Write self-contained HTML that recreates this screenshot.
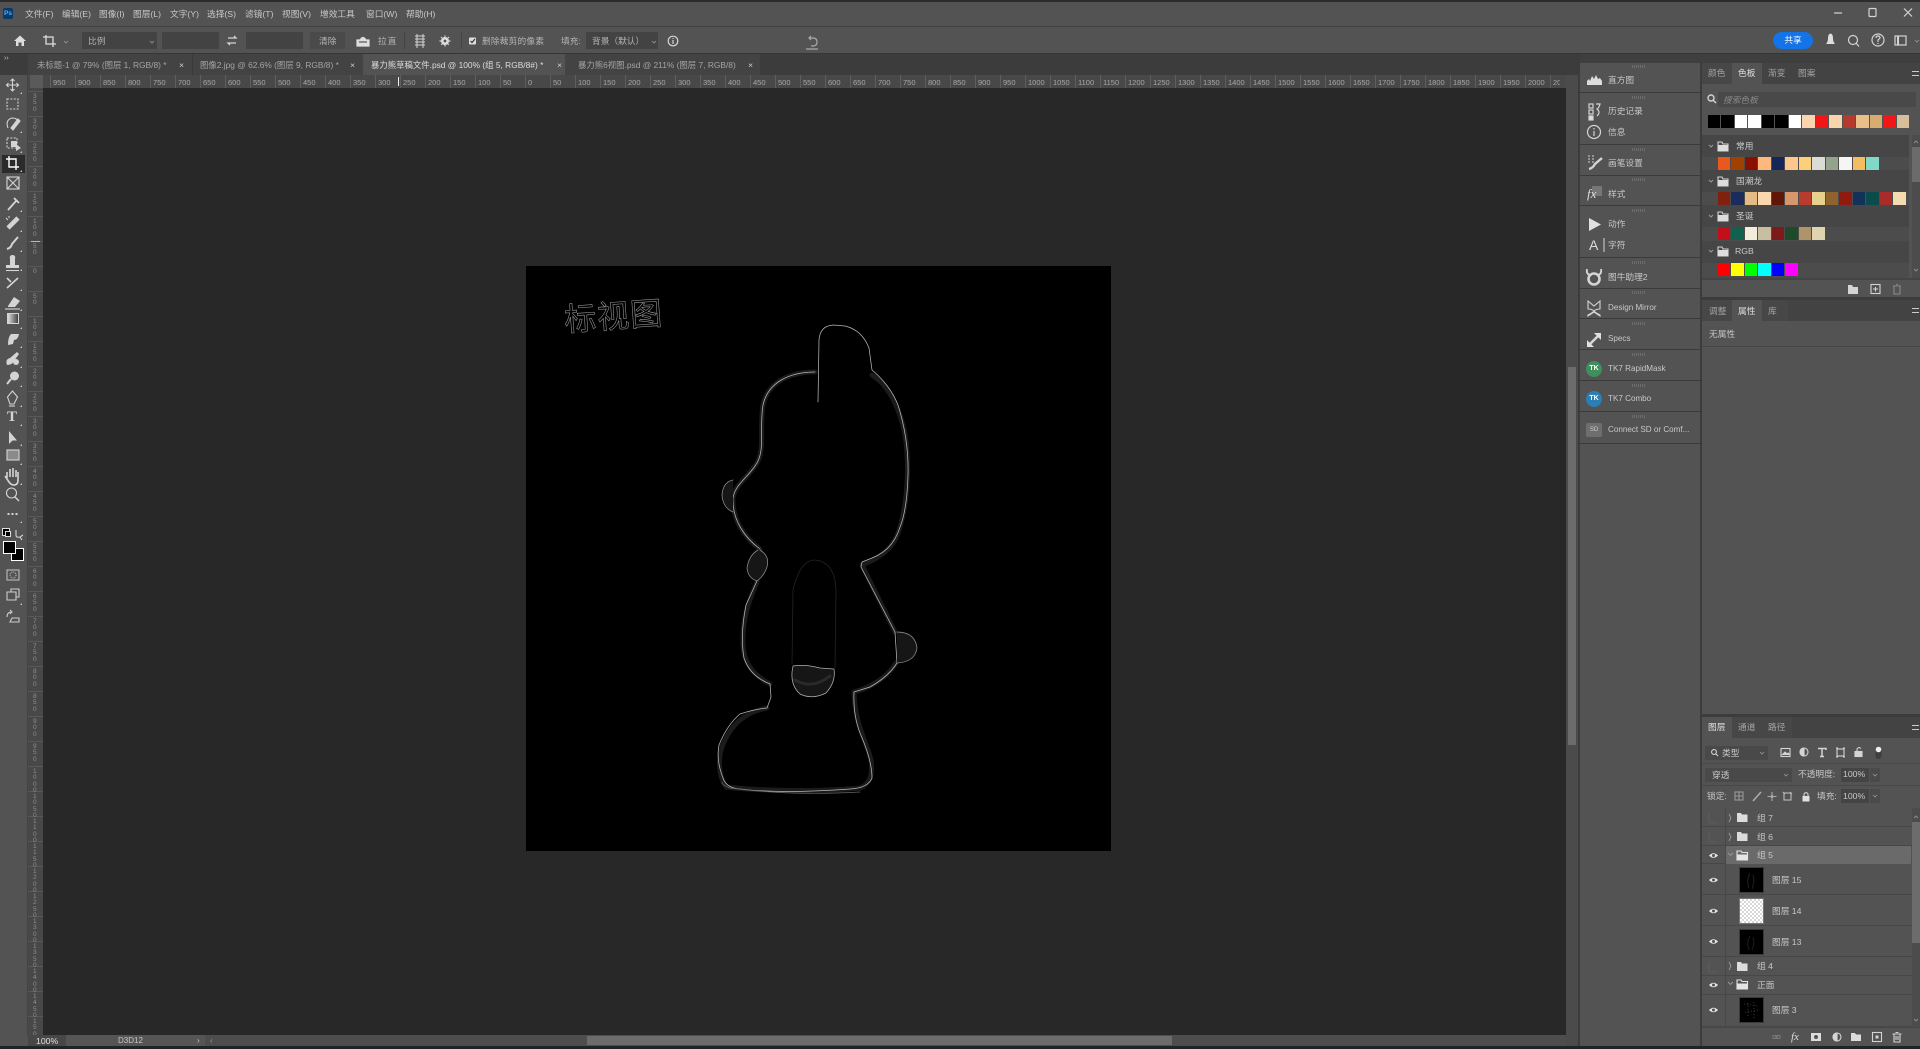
<!DOCTYPE html>
<html lang="zh"><head><meta charset="utf-8"><title>Photoshop</title>
<style>
html,body{margin:0;padding:0;background:#1e1e1e;overflow:hidden}
#r{position:absolute;left:0;top:0;width:1920px;height:1049px;overflow:hidden;background:#535353;filter:blur(.35px);font:8.7px/12px "Liberation Sans","Noto Sans CJK SC",sans-serif;color:#c8c8c8}
#r div,#r svg.a{position:absolute}
.t{white-space:nowrap;margin-top:-6px}
.b{background:#434343}
.m{font-size:8.1px}
.hr{display:flex;left:50px;top:75px;width:1510px;height:13px;overflow:hidden}
.hr span{flex:none;width:25px;height:13px;box-sizing:border-box;border-left:1px solid #5e5e5e;padding-left:2px;font:7.5px/16px "Liberation Sans",sans-serif;color:#a8a8a8}
.vr{left:28px;top:91px;width:15px;height:944px;overflow:hidden}
.vr p{margin:0;height:25px;box-sizing:border-box;border-top:1px solid #585858;padding:2px 0 0 5px;font:6.5px/6.3px "Liberation Sans",sans-serif;color:#8e8e8e;width:15px;word-break:break-all}
.vr p i{display:block;width:5px;font-style:normal}
.sw{display:flex;gap:1.2px}
.sw b{display:block;flex:none;width:12.3px;height:12.5px}
.g{height:3px;width:14px;background:repeating-linear-gradient(90deg,#6c6c6c 0 1px,transparent 1px 2px)}
.p{left:1580px;width:120px;background:#535353;border-bottom:1px solid #3a3a3a}
.l{left:1702px;width:210px;border-bottom:1px solid #474747}
</style></head><body><div id="r">

<!-- top -->
<div style="left:0;top:0;width:1920px;height:2px;background:#2c2c2c"></div>
<div style="left:0;top:26px;width:1920px;height:1px;background:#424242"></div>
<div style="left:0;top:53px;width:1920px;height:1px;background:#363636"></div>
<div style="left:3px;top:8px;width:10px;height:11px;background:#0a3a6a;border-radius:2px;color:#4db0ff;font:bold 6.5px/11px 'Liberation Sans',sans-serif;text-align:center">Ps</div>
<div class="t" style="left:25px;top:14px">文件(F)</div>
<div class="t" style="left:62px;top:14px">编辑(E)</div>
<div class="t" style="left:99px;top:14px">图像(I)</div>
<div class="t" style="left:133px;top:14px">图层(L)</div>
<div class="t" style="left:170px;top:14px">文字(Y)</div>
<div class="t" style="left:207px;top:14px">选择(S)</div>
<div class="t" style="left:245px;top:14px">滤镜(T)</div>
<div class="t" style="left:282px;top:14px">视图(V)</div>
<div class="t" style="left:320px;top:14px">增效工具</div>
<div class="t" style="left:366px;top:14px">窗口(W)</div>
<div class="t" style="left:406px;top:14px">帮助(H)</div>

<!-- options -->
<div class="b" style="left:82px;top:32px;width:75px;height:17px"></div>
<div class="t" style="left:88px;top:41px;color:#b4b4b4">比例</div>
<div class="b" style="left:162px;top:32px;width:57px;height:17px"></div>
<div class="b" style="left:246px;top:32px;width:57px;height:17px"></div>
<div style="left:310px;top:32px;width:35px;height:17px;background:#4a4a4a"></div>
<div class="t" style="left:319px;top:41px;color:#b4b4b4">清除</div>
<div class="t" style="left:378px;top:41px;color:#b4b4b4;letter-spacing:1px">拉直</div>
<div style="left:404px;top:32px;width:1px;height:17px;background:#444"></div>
<div style="left:461px;top:32px;width:1px;height:17px;background:#444"></div>
<div class="t" style="left:482px;top:41px;color:#b4b4b4;letter-spacing:.2px">删除裁剪的像素</div>
<div class="t" style="left:561px;top:41px;color:#b4b4b4">填充:</div>
<div class="b" style="left:586px;top:32px;width:72px;height:17px"></div>
<div class="t" style="left:592px;top:41px;color:#b4b4b4">背景（默认）</div>
<div style="left:1773px;top:32px;width:40px;height:17px;background:#1473e6;border-radius:9px;color:#fff;text-align:center;line-height:17px">共享</div>

<!-- tabs -->
<div style="left:0;top:54px;width:1578px;height:21px;background:#3c3c3c"></div>
<div style="left:28px;top:54px;width:732px;height:21px;background:#434343"></div>
<div style="left:192px;top:54px;width:1px;height:21px;background:#3a3a3a"></div>
<div style="left:363px;top:54px;width:202px;height:21px;background:#535353"></div>
<div class="t" style="left:37px;top:65px;color:#a4a4a4;font-size:8.4px">未标题-1 @ 79% (图层 1, RGB/8) *</div><div class="t" style="left:179px;top:65px;color:#ccc">×</div>
<div class="t" style="left:200px;top:65px;color:#a4a4a4;font-size:8.4px">图像2.jpg @ 62.6% (图层 9, RGB/8) *</div><div class="t" style="left:350px;top:65px;color:#ccc">×</div>
<div class="t" style="left:371px;top:65px;color:#ddd;font-size:8.4px">暴力熊草稿文件.psd @ 100% (组 5, RGB/8#) *</div><div class="t" style="left:557px;top:65px;color:#ccc">×</div>
<div class="t" style="left:578px;top:65px;color:#a4a4a4;font-size:8.4px">暴力熊6视图.psd @ 211% (图层 7, RGB/8)</div><div class="t" style="left:748px;top:65px;color:#ccc">×</div>
<div class="t" style="left:4px;top:59px;font-size:7px">››</div>

<!-- rulers -->
<div style="left:28px;top:75px;width:1538px;height:13px;background:#484848"></div>
<div style="left:30px;top:75px;width:13px;height:13px;background:#5a5a5a"></div>
<div style="left:28px;top:88px;width:15px;height:947px;background:#484848"></div>
<div style="left:27px;top:75px;width:1px;height:960px;background:#444"></div>
<div class="hr"><span>950</span><span>900</span><span>850</span><span>800</span><span>750</span><span>700</span><span>650</span><span>600</span><span>550</span><span>500</span><span>450</span><span>400</span><span>350</span><span>300</span><span>250</span><span>200</span><span>150</span><span>100</span><span>50</span><span>0</span><span>50</span><span>100</span><span>150</span><span>200</span><span>250</span><span>300</span><span>350</span><span>400</span><span>450</span><span>500</span><span>550</span><span>600</span><span>650</span><span>700</span><span>750</span><span>800</span><span>850</span><span>900</span><span>950</span><span>1000</span><span>1050</span><span>1100</span><span>1150</span><span>1200</span><span>1250</span><span>1300</span><span>1350</span><span>1400</span><span>1450</span><span>1500</span><span>1550</span><span>1600</span><span>1650</span><span>1700</span><span>1750</span><span>1800</span><span>1850</span><span>1900</span><span>1950</span><span>2000</span><span>2050</span></div>
<div style="left:398px;top:77px;width:1px;height:9px;background:#eee"></div>
<div class="vr"><p><i>350</i></p><p><i>300</i></p><p><i>250</i></p><p><i>200</i></p><p><i>150</i></p><p><i>100</i></p><p><i>50</i></p><p><i>0</i></p><p><i>50</i></p><p><i>100</i></p><p><i>150</i></p><p><i>200</i></p><p><i>250</i></p><p><i>300</i></p><p><i>350</i></p><p><i>400</i></p><p><i>450</i></p><p><i>500</i></p><p><i>550</i></p><p><i>600</i></p><p><i>650</i></p><p><i>700</i></p><p><i>750</i></p><p><i>800</i></p><p><i>850</i></p><p><i>900</i></p><p><i>950</i></p><p><i>1000</i></p><p><i>1050</i></p><p><i>1100</i></p><p><i>1150</i></p><p><i>1200</i></p><p><i>1250</i></p><p><i>1300</i></p><p><i>1350</i></p><p><i>1400</i></p><p><i>1450</i></p><p><i>1500</i></p></div>
<div style="left:31px;top:241px;width:9px;height:1px;background:#bbb"></div>

<!-- canvas -->
<div style="left:43px;top:88px;width:1523px;height:947px;background:#282828"></div>
<div style="left:526px;top:266px;width:585px;height:585px;background:#000"></div>
<svg class="a" style="left:0;top:0" width="1920" height="1049" viewBox="0 0 1920 1049" fill="none">
<text x="565" y="331" font-family="'Noto Sans CJK SC',sans-serif" font-size="32" fill="#000" stroke="#9c9c9c" stroke-width=".55" letter-spacing="1" transform="rotate(-4 565 331)">标视图</text>
<g stroke-linejoin="round" stroke-linecap="round">
<g stroke="#1b1b1b" stroke-width="5">
<path d="M815 372C790 372 768 382 763 405C759 430 766 452 755 466C747 478 735 485 733 498C732 520 745 538 760 549M757 582C748 603 742 620 743 645C744 665 755 676 770 684M767 708C745 712 732 725 725 740C717 755 718 775 726 787C760 791 820 792 860 788C870 784 873 775 871 760C866 740 855 725 854 692C870 688 888 677 896 663M895 632L862 565C880 557 894 550 900 527C908 500 910 460 904 429C898 405 888 385 872 375"/>
</g>
<path stroke="#b8b8b8" stroke-width=".75" d="M818 402L819 340Q820 326 833 325L845 326Q862 330 869 348L872 370Q890 385 898 405Q909 440 908 475Q907 510 900 527Q893 550 872 558L862 562L861 567L895 632L897 663Q888 677 870 687L854 692Q853 715 860 733Q872 760 872 778Q868 788 850 789Q780 794 740 789Q726 788 723 778Q716 760 719 745Q727 725 740 714Q755 709 767 708L771 697L770 684Q750 676 744 658Q740 635 746 605L757 581M815 372C790 372 768 382 763 405C759 430 766 452 755 466C747 478 735 485 733 498C732 520 745 538 760 549"/>
<path stroke="#909090" stroke-width=".75" fill="#161616" d="M733 480Q723 482 722 495Q723 508 733 512M760 550Q770 556 767 567Q764 576 757 581Q748 578 747 568Q749 555 758 550M897 632Q915 632 917 648Q915 662 897 663"/>
<path stroke="#b0b0b0" stroke-width=".75" fill="#161616" d="M793 666Q805 664 820 668L834 669Q836 682 826 693Q812 700 800 694Q791 686 792 672Z"/>
<path stroke="#242424" stroke-width=".8" d="M792 664L793 590Q800 560 815 560Q835 562 836 590L835 668"/>
<path stroke="#2a2a2a" stroke-width="3" d="M795 680Q812 690 830 676"/>
<path stroke="#666" stroke-width=".7" d="M722 782Q722 785 730 788Q790 796 860 792"/>
</g>

<!-- tool icons -->
<g stroke="#d4d4d4" stroke-width="1.1">
<path d="M12.5 79V91M6.5 85H18.5M10.5 81L12.5 79L14.5 81M10.5 89L12.5 91L14.5 89M8.5 83L6.5 85L8.5 87M16.5 83L18.5 85L16.500 87"/>
<rect x="7" y="99" width="11" height="10" stroke-dasharray="2 1.4"/>
<path d="M8 128Q5 120 12 118Q18 118 18 123"/><path d="M11 128L18 119L20 121L13 130Z" fill="#d4d4d4"/>
<rect x="7" y="138" width="10" height="10" stroke-dasharray="2 1.4"/><path d="M11 141H17V147H11Z" fill="#d4d4d4" stroke="none"/><path d="M16 144L21 148L16 151Z" fill="#d4d4d4" stroke="none"/>
<path d="M9 156V167H19M6 159H16V170" stroke="#fff" stroke-width="1.4"/>
<rect x="7" y="177" width="12" height="12"/><path d="M7 177L19 189M19 177L7 189"/>
<path d="M8 210L16 201M14 198L19 203" stroke-width="1.8"/>
<path d="M8 228L18 218" stroke-width="4.5"/><path d="M6 218L8 220M9 216V218" stroke-width="1"/>
<path d="M7 249Q11 248 12 244L18 237" stroke-width="2"/>
<path d="M6 268H19V265H15V259Q16 255 12.5 255Q9 255 10 259V265H6Z" fill="#d4d4d4" stroke="none"/><path d="M6 270.5H19"/>
<path d="M7 288L18 278M7 278L11 282" stroke-width="1.6"/>
<path d="M8 306L14 297L20 301L15 307H8Z" fill="#d4d4d4" stroke="none"/><path d="M5 309H20"/>
<path d="M8 345Q8 337 11 334H19Q18 340 14 340L13 344Z" fill="#d4d4d4" stroke="none"/>
<path d="M7 365Q5 359 10 358L17 352L19 354L14 361Q12 365 7 365Z" fill="#d4d4d4" stroke="none"/><circle cx="16" cy="362" r="3" fill="#d4d4d4" stroke="none"/>
<circle cx="14.5" cy="376" r="4.5" fill="#d4d4d4" stroke="none"/><path d="M11 379L7 384" stroke-width="2"/>
<path d="M12.5 391L17.5 397L14 404H10L7.5 397Z"/><path d="M9 406H15"/>
<path d="M9 431V444L12.5 440.5H17Z" fill="#d4d4d4" stroke="none"/>
<rect x="7" y="450" width="12" height="10" fill="#8a8a8a"/>
<path d="M7 478V472M10 477V469M13 477V468M16 477V470M5 476L9 482Q11 485 14 485Q18 485 18 480V472" stroke-width="1.6"/>
<circle cx="11.5" cy="493" r="5"/><path d="M15 497L19 501" stroke-width="1.5"/>
<path d="M7.5 514H9.5M11.5 514H13.5M15.5 514H17.5" stroke-width="2"/>
<rect x="7" y="570" width="12" height="10" stroke="#bbb"/><circle cx="13" cy="575" r="3" stroke="#bbb" stroke-dasharray="1 1"/>
<path d="M7 592H16V600H7ZM11 592V589H19V597H16" stroke="#ccc"/>
<path d="M7 617Q7 612 12 612M10 610L12 612L10 614M12 618H19V622H10Z" stroke="#ccc"/>
<path d="M16 530V535Q16 538 20 537M23 535L20 537L22 540" stroke-width="1.1"/>
</g>
<!-- tool corner triangles -->
<path fill="#c8c8c8" d="M22 92v2h-2zM22 131v2h-2zM22 151v2h-2zM22 170v2h-2zM22 210v2h-2zM22 230v2h-2zM22 250v2h-2zM22 269v2h-2zM22 289v2h-2zM22 309v2h-2zM22 327v2h-2zM22 346v2h-2zM22 366v2h-2zM22 385v2h-2zM22 405v2h-2zM22 424v2h-2zM22 444v2h-2zM22 463v2h-2zM22 483v2h-2zM22 521v2h-2zM22 603v2h-2z"/>
</svg>
<div style="left:2px;top:155px;width:23px;height:18px;background:#2b2b2b;z-index:-1"></div>
<div style="left:7px;top:313px;width:12px;height:11px;background:linear-gradient(90deg,#dcdcdc,#444);border:1px solid #d4d4d4;box-sizing:border-box"></div>
<div class="t" style="left:7px;top:417px;font:bold 15px/12px 'Liberation Serif',serif;color:#d4d4d4">T</div>
<div style="left:2px;top:528px;width:6px;height:6px;background:#000;border:1px solid #ddd"></div>
<div style="left:5px;top:531px;width:4px;height:4px;background:#000;border:1px solid #ddd"></div>
<div style="left:11px;top:548px;width:11px;height:11px;background:#000;border:1px solid #fff"></div>
<div style="left:3px;top:541px;width:11px;height:11px;background:#000;border:1px solid #fff"></div>

<!-- options icons -->
<svg class="a" style="left:0;top:0" width="1920" height="1049" viewBox="0 0 1920 1049" fill="none" stroke="#d4d4d4" stroke-width="1.2">
<path d="M14 41L20 35.5L26 41H24V46H21.5V42.5H18.5V46H16V41Z" fill="#ddd" stroke="none"/>
<path d="M46 35V44H56M43 37H53V47" stroke="#ddd" stroke-width="1.3"/>
<path d="M64 41L66 43L68 41M150 41L152 43L154 41M652 41L654 43L656 41" stroke="#999" stroke-width=".8"/>
<path d="M228 38H236L234 36M236 43H228L230 45" stroke-width="1.3"/>
<path d="M357 40H369V46H357ZM360 40Q363 35 366 40" stroke="#ddd" fill="#ddd"/><path d="M359 42H367" stroke="#535353"/>
<path d="M415 36H425M415 39H425M415 42H425M415 45H425M417 34V48M423 34V48" stroke-width="1"/>
<circle cx="445" cy="41" r="4" fill="#ddd" stroke="none"/><circle cx="445" cy="41" r="1.4" fill="#535353" stroke="none"/><path d="M445 35.500V46.500M439.500 41H450.500M441 37L449 45M449 37L441 45" stroke-width="1.2" stroke-dasharray="1.500 8"/>
<rect x="469" y="37.5" width="7" height="7" fill="#ddd" rx="1" stroke="none"/><path d="M470.5 41L472 42.5L475 39" stroke="#333"/>
<circle cx="673" cy="41" r="4.8"/><path d="M673 40V44M673 38V39"/>
<path d="M809 38H813Q817 38 817 42T813 46H811M811 36L809 38L811 40M806 49H818" stroke="#aaa"/>
<path d="M1834 13H1842"/><rect x="1869" y="8.5" width="7" height="8" rx="1"/><path d="M1904 8.5L1912 16.5M1912 8.5L1904 16.5"/>
<path d="M1826 44H1835Q1833 42 1833 38Q1833 34 1830.5 33.5Q1828 34 1828 38Q1828 42 1826 44Z" fill="#ddd" stroke="none"/>
<circle cx="1853" cy="40" r="4.5"/><path d="M1856 43L1859 46.5"/>
<circle cx="1878" cy="40" r="6"/><path d="M1876 38Q1876 36 1878 36T1880 38L1878 40V42M1878 43V44"/>
<rect x="1895" y="36" width="11" height="9"/><path d="M1898 36V45" stroke-width="2"/>
<path d="M1915 40L1917 42L1919 40" stroke="#999" stroke-width=".8"/>
<path d="M1692 57L1690 59L1692 61M1695 57L1693 59L1695 61M1913 57L1915 59L1913 61M1916 57L1918 59L1916 61" stroke-width=".8"/>
</svg>

<!-- bottom status -->
<div style="left:28px;top:1035px;width:1550px;height:11px;background:#4d4d4d"></div>
<div style="left:28px;top:1035px;width:38px;height:11px;background:#474747"></div>
<div style="left:66px;top:1035px;width:139px;height:11px;background:#555"></div>
<div style="left:587px;top:1036px;width:585px;height:9px;background:#6c6c6c"></div>
<div class="t" style="left:36px;top:1041px;color:#e0e0e0">100%</div>
<div class="t" style="left:118px;top:1041px;font-size:8px">D3D12</div>
<div class="t" style="left:197px;top:1041px;font-size:8px">›</div>
<div class="t" style="left:210px;top:1041px;font-size:8px;color:#999">‹</div>
<div style="left:0;top:1046px;width:1920px;height:3px;background:#232323"></div>

<!-- v scrollbar -->
<div style="left:1566px;top:75px;width:12px;height:971px;background:#4b4b4b"></div>
<div style="left:1568px;top:367px;width:8px;height:378px;background:#6c6c6c"></div>
<div style="left:1578px;top:54px;width:2px;height:992px;background:#3c3c3c"></div>
<div style="left:1700px;top:54px;width:2px;height:992px;background:#3c3c3c"></div>
<div style="left:1580px;top:54px;width:340px;height:9px;background:#3f3f3f"></div>

<!-- dock -->
<div class="p" style="top:63px;height:29px"></div>
<div class="p" style="top:93px;height:51px"></div>
<div class="p" style="top:145px;height:30px"></div>
<div class="p" style="top:176px;height:29px"></div>
<div class="p" style="top:206px;height:51px"></div>
<div class="p" style="top:258px;height:30px"></div>
<div class="p" style="top:289px;height:29px"></div>
<div class="p" style="top:319px;height:30px"></div>
<div class="p" style="top:350px;height:30px"></div>
<div class="p" style="top:381px;height:30px"></div>
<div class="p" style="top:412px;height:31px"></div>
<div class="g" style="left:1632px;top:65px"></div><div class="g" style="left:1632px;top:96px"></div><div class="g" style="left:1632px;top:148px"></div><div class="g" style="left:1632px;top:178px"></div><div class="g" style="left:1632px;top:209px"></div><div class="g" style="left:1632px;top:261px"></div><div class="g" style="left:1632px;top:291px"></div><div class="g" style="left:1632px;top:322px"></div><div class="g" style="left:1632px;top:353px"></div><div class="g" style="left:1632px;top:384px"></div><div class="g" style="left:1632px;top:415px"></div>
<div class="t" style="left:1608px;top:80px">直方图</div>
<div class="t" style="left:1608px;top:111px">历史记录</div>
<div class="t" style="left:1608px;top:132px">信息</div>
<div class="t" style="left:1608px;top:163px">画笔设置</div>
<div class="t" style="left:1608px;top:194px">样式</div>
<div class="t" style="left:1608px;top:224px">动作</div>
<div class="t" style="left:1608px;top:245px">字符</div>
<div class="t" style="left:1608px;top:277px">图牛助理2</div>
<div class="t m" style="left:1608px;top:308px">Design Mirror</div>
<div class="t m" style="left:1608px;top:339px">Specs</div>
<div class="t m" style="left:1608px;top:369px">TK7 RapidMask</div>
<div class="t m" style="left:1608px;top:399px">TK7 Combo</div>
<div class="t m" style="left:1608px;top:430px">Connect SD or Comf...</div>
<div class="t" style="left:1587px;top:194px;font:italic 13px/12px 'Liberation Serif',serif;color:#ddd;z-index:2">fx</div>
<div class="t" style="left:1589px;top:245px;font:14px/12px 'Liberation Sans',sans-serif;color:#ddd">A</div>
<svg class="a" style="left:0;top:0" width="1920" height="1049" viewBox="0 0 1920 1049" fill="none" stroke="#d4d4d4" stroke-width="1.2">
<path d="M1587 85V81L1589 79L1590 81L1592 76L1594 79L1596 75L1598 79L1600 78L1602 81V85Z" fill="#ddd" stroke="none"/>
<rect x="1589" y="104" width="4" height="4"/><rect x="1589" y="110" width="4" height="4"/><rect x="1589" y="116" width="4" height="4" fill="#ddd"/><path d="M1596 104H1600Q1599 108 1597 109Q1601 112 1597 116"/>
<circle cx="1594" cy="132" r="6.5"/><path d="M1594 131V136M1594 128V129.5"/>
<path d="M1588 156H1590M1592 156H1594M1588 159H1590M1592 159H1594M1588 162H1590M1592 162H1594" stroke-width="1"/><path d="M1589 169Q1593 168 1595 164L1602 158" stroke-width="2.4"/>
<rect x="1592" y="186" width="10" height="10" fill="#777" stroke="none"/>
<path d="M1589 218V231L1601 224.500Z" fill="#e0e0e0" stroke="none"/>
<path d="M1604 238V252" stroke-width="1"/>
<circle cx="1594" cy="279" r="5.5" stroke-width="2.6"/><path d="M1587 269Q1586 274 1590 275M1601 269Q1602 274 1598 275" stroke-width="1.8"/>
<path d="M1588 301L1594 306L1600 301V309Q1596 309 1594 311Q1596 313 1600 315V316L1594 312L1588 316V315Q1592 313 1594 311Q1592 309 1588 309Z" stroke-width="1.1"/>
<path d="M1588 346L1600 334" stroke-width="2.6"/><path d="M1594 333H1601V340Z M1587 340V347H1594Z" fill="#e0e0e0" stroke="none"/>
</svg>
<div style="left:1586px;top:361px;width:16px;height:16px;border-radius:50%;background:#3f8f5c;color:#fff;font:bold 7px/16px 'Liberation Sans',sans-serif;text-align:center">TK</div>
<div style="left:1586px;top:391px;width:16px;height:16px;border-radius:50%;background:#2a7fb5;color:#fff;font:bold 7px/16px 'Liberation Sans',sans-serif;text-align:center">TK</div>
<div style="left:1586px;top:423px;width:16px;height:14px;border-radius:2px;background:#6e6e6e;color:#ccc;font:6px/14px 'Liberation Sans',sans-serif;text-align:center">SD</div>

<!-- swatches panel -->
<div style="left:1702px;top:63px;width:218px;height:21px;background:#434343"></div>
<div style="left:1732px;top:63px;width:30px;height:21px;background:#535353"></div>
<div style="left:1702px;top:63px;width:30px;height:21px;background:#474747"></div>
<div class="t" style="left:1708px;top:73px;color:#a4a4a4">颜色</div>
<div class="t" style="left:1738px;top:73px;color:#e0e0e0">色板</div>
<div class="t" style="left:1768px;top:73px;color:#a4a4a4">渐变</div>
<div class="t" style="left:1798px;top:73px;color:#a4a4a4">图案</div>
<div style="left:1912px;top:71px;width:7px;height:1px;border-top:1px solid #ccc;border-bottom:1px solid #ccc;padding-top:2px"></div>
<div style="left:1718px;top:92px;width:198px;height:15px;background:#494949"></div>
<div class="t" style="left:1723px;top:100px;font-style:italic;color:#8a8a8a">搜索色板</div>
<div class="sw" style="left:1708px;top:115px"><b style="background:#000"></b><b style="background:#000"></b><b style="background:#fff"></b><b style="background:#fff"></b><b style="background:#000"></b><b style="background:#000"></b><b style="background:#fff"></b><b style="background:#f8d5ac"></b><b style="background:#f21616"></b><b style="background:#f8d5ac"></b><b style="background:#b43a2e"></b><b style="background:#e8c088"></b><b style="background:#d8ab70"></b><b style="background:#f21616"></b><b style="background:#d7bf9c"></b></div>

<div style="left:1702px;top:135px;width:207px;height:143px;background:#4c4c4c"></div>
<div style="left:1702px;top:135px;width:207px;height:22px;background:#464646"></div>
<div style="left:1702px;top:170px;width:207px;height:22px;background:#464646"></div>
<div style="left:1702px;top:205px;width:207px;height:22px;background:#464646"></div>
<div style="left:1702px;top:241px;width:207px;height:22px;background:#464646"></div>
<div class="t" style="left:1736px;top:146px">常用</div>
<div class="t" style="left:1736px;top:181px">国潮龙</div>
<div class="t" style="left:1736px;top:216px">圣诞</div>
<div class="t" style="left:1735px;top:251px">RGB</div>
<div class="sw" style="left:1718px;top:157px"><b style="background:#e9591e"></b><b style="background:#a04100"></b><b style="background:#8a0f00"></b><b style="background:#fdb97d"></b><b style="background:#14275a"></b><b style="background:#fdc68f"></b><b style="background:#fecf7a"></b><b style="background:#dbdcd6"></b><b style="background:#94a28e"></b><b style="background:#f5f5f3"></b><b style="background:#f3bd62"></b><b style="background:#7fd8c8"></b></div>
<div class="sw" style="left:1718px;top:192px"><b style="background:#80210f"></b><b style="background:#1b2c5c"></b><b style="background:#e4bb85"></b><b style="background:#f9d8ae"></b><b style="background:#601708"></b><b style="background:#d6986a"></b><b style="background:#b73b2e"></b><b style="background:#e6d08e"></b><b style="background:#8f622e"></b><b style="background:#8f1b0f"></b><b style="background:#12325a"></b><b style="background:#0a4b4b"></b><b style="background:#a92c2a"></b><b style="background:#f5dcb0"></b></div>
<div class="sw" style="left:1718px;top:227px"><b style="background:#c1101c"></b><b style="background:#12604e"></b><b style="background:#f3ebdc"></b><b style="background:#c7bf9f"></b><b style="background:#7e1a1c"></b><b style="background:#1e4a2a"></b><b style="background:#ae9468"></b><b style="background:#e0d3b0"></b></div>
<div class="sw" style="left:1718px;top:263px"><b style="background:#f00"></b><b style="background:#ff0"></b><b style="background:#0f0"></b><b style="background:#0ff"></b><b style="background:#00f"></b><b style="background:#f0f"></b></div>
<div style="left:1912px;top:135px;width:8px;height:143px;background:#4c4c4c"></div>
<div style="left:1912px;top:147px;width:8px;height:35px;background:#6b6b6b"></div>
<div style="left:1702px;top:278px;width:218px;height:2px;background:#444"></div>

<!-- properties -->
<div style="left:1702px;top:297px;width:218px;height:3px;background:#3c3c3c"></div>
<div style="left:1702px;top:300px;width:218px;height:21px;background:#434343"></div>
<div style="left:1702px;top:300px;width:30px;height:21px;background:#474747"></div>
<div style="left:1732px;top:300px;width:30px;height:21px;background:#535353"></div>
<div style="left:1762px;top:300px;width:26px;height:21px;background:#474747"></div>
<div class="t" style="left:1709px;top:311px;color:#a4a4a4">调整</div>
<div class="t" style="left:1738px;top:311px;color:#e0e0e0">属性</div>
<div class="t" style="left:1768px;top:311px;color:#a4a4a4">库</div>
<div style="left:1912px;top:308px;width:7px;height:1px;border-top:1px solid #ccc;border-bottom:1px solid #ccc;padding-top:2px"></div>
<div class="t" style="left:1709px;top:334px">无属性</div>
<div style="left:1702px;top:346px;width:218px;height:1px;background:#454545"></div>

<!-- layers -->
<div style="left:1702px;top:714px;width:218px;height:3px;background:#3c3c3c"></div>
<div style="left:1702px;top:717px;width:218px;height:21px;background:#434343"></div>
<div style="left:1702px;top:717px;width:30px;height:21px;background:#535353"></div>
<div style="left:1732px;top:717px;width:60px;height:21px;background:#474747"></div>
<div class="t" style="left:1708px;top:727px;color:#e0e0e0">图层</div>
<div class="t" style="left:1738px;top:727px;color:#a4a4a4">通道</div>
<div class="t" style="left:1768px;top:727px;color:#a4a4a4">路径</div>
<div style="left:1912px;top:725px;width:7px;height:1px;border-top:1px solid #ccc;border-bottom:1px solid #ccc;padding-top:2px"></div>
<div style="left:1705px;top:746px;width:63px;height:14px;background:#494949"></div>
<div class="t" style="left:1722px;top:753px">类型</div>
<div style="left:1702px;top:763px;width:218px;height:1px;background:#484848"></div>
<div style="left:1705px;top:768px;width:87px;height:14px;background:#494949"></div>
<div class="t" style="left:1712px;top:775px">穿透</div>
<div class="t" style="left:1798px;top:774px">不透明度:</div>
<div style="left:1841px;top:768px;width:28px;height:14px;background:#444"></div>
<div style="left:1870px;top:768px;width:10px;height:14px;background:#4a4a4a"></div>
<div class="t" style="left:1843px;top:774px">100%</div>
<div style="left:1702px;top:785px;width:218px;height:1px;background:#484848"></div>
<div class="t" style="left:1707px;top:796px">锁定:</div>
<div class="t" style="left:1817px;top:796px">填充:</div>
<div style="left:1841px;top:789px;width:28px;height:14px;background:#444"></div>
<div style="left:1870px;top:789px;width:10px;height:14px;background:#4a4a4a"></div>
<div class="t" style="left:1843px;top:796px">100%</div>

<div class="l" style="top:808px;height:18px"></div>
<div class="l" style="top:827px;height:18px"></div>
<div class="l" style="top:846px;height:17px"></div>
<div style="left:1725px;top:846px;width:186px;height:18px;background:#6a6a6a"></div>
<div class="l" style="top:864px;height:30px"></div>
<div class="l" style="top:895px;height:30px"></div>
<div class="l" style="top:926px;height:30px"></div>
<div class="l" style="top:957px;height:18px"></div>
<div class="l" style="top:976px;height:18px"></div>
<div class="l" style="top:995px;height:31px"></div>
<div style="left:1725px;top:808px;width:1px;height:219px;background:#484848"></div>
<div class="t" style="left:1757px;top:818px">组 7</div>
<div class="t" style="left:1757px;top:837px">组 6</div>
<div class="t" style="left:1757px;top:855px">组 5</div>
<div class="t" style="left:1772px;top:880px">图层 15</div>
<div class="t" style="left:1772px;top:911px">图层 14</div>
<div class="t" style="left:1772px;top:942px">图层 13</div>
<div class="t" style="left:1757px;top:966px">组 4</div>
<div class="t" style="left:1757px;top:985px">正面</div>
<div class="t" style="left:1772px;top:1010px">图层 3</div>
<div style="left:1740px;top:868px;width:23px;height:24px;background:#000;box-shadow:0 0 0 1px #3a3a3a"></div>
<div style="left:1740px;top:899px;width:23px;height:24px;background:repeating-conic-gradient(#d8d8d8 0 25%,#fff 0 50%) 0 0/4px 4px;box-shadow:0 0 0 1px #777"></div>
<div style="left:1740px;top:930px;width:23px;height:24px;background:#000;box-shadow:0 0 0 1px #3a3a3a"></div>
<div style="left:1740px;top:998px;width:23px;height:24px;background:#000;box-shadow:0 0 0 1px #3a3a3a"></div>
<div style="left:1912px;top:808px;width:8px;height:219px;background:#4c4c4c"></div>
<div style="left:1912px;top:822px;width:8px;height:121px;background:#6c6c6c"></div>
<div style="left:1702px;top:1027px;width:218px;height:1px;background:#484848"></div>
<div class="t" style="left:1791px;top:1037px;font:italic 11px/12px 'Liberation Serif',serif;color:#ddd">fx</div>

<svg class="a" style="left:0;top:0" width="1920" height="1049" viewBox="0 0 1920 1049" fill="none" stroke="#d4d4d4" stroke-width="1.1">
<!-- swatch panel icons -->
<circle cx="1711" cy="98" r="3" stroke-width="1.4"/><path d="M1713 100L1716 103" stroke-width="1.4"/>
<path d="M1709 145L1711 147L1713 145" stroke="#999"/><path d="M1718 142H1722L1723 144H1728V151H1718Z" fill="#4c4c4c"/><path d="M1718 145H1728V151H1718Z" fill="#ddd" stroke="none"/>
<path d="M1709 180L1711 182L1713 180" stroke="#999"/><path d="M1718 177H1722L1723 179H1728V186H1718Z"/><path d="M1718 180H1728V186H1718Z" fill="#ddd" stroke="none"/>
<path d="M1709 215L1711 217L1713 215" stroke="#999"/><path d="M1718 212H1722L1723 214H1728V221H1718Z"/><path d="M1718 215H1728V221H1718Z" fill="#ddd" stroke="none"/>
<path d="M1709 250L1711 252L1713 250" stroke="#999"/><path d="M1718 247H1722L1723 249H1728V256H1718Z"/><path d="M1718 250H1728V256H1718Z" fill="#ddd" stroke="none"/>
<path d="M1914 143L1916 141L1918 143M1914 269L1916 271L1918 269" stroke="#888"/>
<path d="M1848 285H1852L1853 287H1858V294H1848Z" fill="#d4d4d4" stroke="none"/>
<rect x="1871" y="284.500" width="9" height="9"/><path d="M1875.500 287V291.500M1873 289H1878"/>
<path d="M1893 286H1901M1894 286V294H1900V286M1896 284.500H1898" stroke="#888"/>
<!-- layer filter icons -->
<circle cx="1714" cy="752" r="2.4"/><path d="M1716 754L1718 756"/>
<path d="M1760 752L1762 754L1764 752M1784 774L1786 776L1788 774M1873 774L1875 776L1877 774M1873 795L1875 797L1877 795" stroke="#999" stroke-width=".8"/>
<rect x="1781" y="748.500" width="9" height="8"/><path d="M1782 755L1785 752L1787 754L1788 753L1790 755" fill="#d4d4d4"/>
<circle cx="1804" cy="752" r="4"/><path d="M1804 748A4 4 0 0 0 1804 756Z" fill="#d4d4d4"/>
<path d="M1818 748.500H1826V750M1822 748.500V756.500M1820 756.500H1824" stroke-width="1.5"/>
<rect x="1837" y="749" width="7" height="7"/><path d="M1836 748H1838M1843 748H1845M1836 757H1838M1843 757H1845"/>
<rect x="1855" y="751.500" width="7" height="5" fill="#d4d4d4"/><path d="M1857 751.500V749Q1858.500 746.500 1861 748.500"/>
<rect x="1875.500" y="748" width="6" height="11" rx="3" fill="#3e3e3e" stroke="none"/><circle cx="1878.500" cy="749.500" r="2.800" fill="#eee" stroke="none"/>
<!-- lock icons -->
<rect x="1735" y="792" width="8" height="8" stroke="#999"/><path d="M1735 796H1743M1739 792V800" stroke="#999"/>
<path d="M1753 801L1761 792" stroke="#aaa" stroke-width="1.6"/>
<path d="M1772 792V801M1767.500 796.500H1776.500" stroke="#aaa"/><circle cx="1772" cy="796.500" r="1.500" fill="#aaa" stroke="none"/>
<rect x="1784" y="793" width="7" height="7" stroke="#bbb"/><path d="M1783 792L1785 794M1790 792L1792 794" stroke="#bbb"/>
<rect x="1802.500" y="796" width="7" height="5.500" fill="#e0e0e0" stroke="none"/><path d="M1804 796V794Q1806 791 1808 794V796"/>
<!-- eye icons -->
<g fill="#e6e6e6" stroke="none">
<path d="M1709 855.500Q1713.500 851 1718 855.500Q1713.500 860 1709 855.500Z"/>
<path d="M1709 880Q1713.500 875.500 1718 880Q1713.500 884.500 1709 880Z"/>
<path d="M1709 911Q1713.500 906.500 1718 911Q1713.500 915.500 1709 911Z"/>
<path d="M1709 941.500Q1713.500 937 1718 941.500Q1713.500 946 1709 941.500Z"/>
<path d="M1709 985Q1713.500 980.500 1718 985Q1713.500 989.500 1709 985Z"/>
<path d="M1709 1010Q1713.500 1005.500 1718 1010Q1713.500 1014.500 1709 1010Z"/>
</g>
<g fill="#535353" stroke="none"><circle cx="1713.500" cy="855.500" r="1.500"/><circle cx="1713.500" cy="880" r="1.500"/><circle cx="1713.500" cy="911" r="1.500"/><circle cx="1713.500" cy="941.500" r="1.500"/><circle cx="1713.500" cy="985" r="1.500"/><circle cx="1713.500" cy="1010" r="1.500"/></g>
<g stroke="#5f5f5f" stroke-width=".8"><path d="M1709 813V823H1718M1709 832V842H1718M1709 962V972H1718"/></g>
<!-- chevrons & folders -->
<g stroke="#999" stroke-width=".9"><path d="M1729 814L1731 818L1729 822M1729 833L1731 837L1729 841M1729 962L1731 966L1729 970M1728 853L1730.500 855.500L1733 853M1728 982L1730.500 984.500L1733 982"/></g>
<g fill="#dcdcdc" stroke="none"><path d="M1737 813H1741L1742 814.500H1747.500V822H1737Z"/><path d="M1737 832H1741L1742 833.500H1747.500V841H1737Z"/><path d="M1737 962H1741L1742 963.500H1747.500V971H1737Z"/></g>
<path d="M1737 851H1741L1742 852.500H1747.500V860H1737Z" stroke="#e4e4e4"/><path d="M1737 854.500H1747.500V860H1737Z" fill="#e4e4e4" stroke="none"/>
<path d="M1737 980H1741L1742 981.500H1747.500V989H1737Z" stroke="#e4e4e4"/><path d="M1737 983.500H1747.500V989H1737Z" fill="#e4e4e4" stroke="none"/>
<path d="M1914 818L1916 816L1918 818M1914 1019L1916 1021L1918 1019" stroke="#888"/>
<!-- thumb marks -->
<path d="M1750 873Q1746 880 1749 888M1753 875Q1755 882 1752 889" stroke="#1e1e1e"/>
<path d="M1750 936Q1746 942 1749 950M1753 937Q1755 944 1752 950" stroke="#1a1a1a"/>
<path d="M1744 1004L1758 1006M1745 1012L1760 1010M1748 1003V1018M1754 1002V1019" stroke="#333" stroke-dasharray="1 2"/>
<!-- footer icons -->
<path d="M1773 1035.500H1776V1038.500H1773ZM1777 1035.500H1780V1038.500H1777ZM1775 1037H1778" stroke="#777"/>
<rect x="1811" y="1033" width="10" height="8" fill="#dcdcdc" stroke="none"/><circle cx="1816" cy="1037" r="2" fill="#535353" stroke="none"/>
<circle cx="1837" cy="1037" r="4"/><path d="M1837 1033A4 4 0 0 0 1837 1041Z" fill="#d4d4d4"/>
<path d="M1851 1033H1855L1856 1034.500H1861V1041H1851Z" fill="#dcdcdc" stroke="none"/>
<rect x="1872.500" y="1032.500" width="9" height="9"/><rect x="1875.500" y="1035.500" width="3" height="3" fill="#d4d4d4" stroke="none"/>
<path d="M1892.500 1034H1901.500M1894 1034V1042H1900V1034M1895.500 1032.500H1898.500M1896 1036V1040M1898 1036V1040"/>
</svg>
</div></body></html>
